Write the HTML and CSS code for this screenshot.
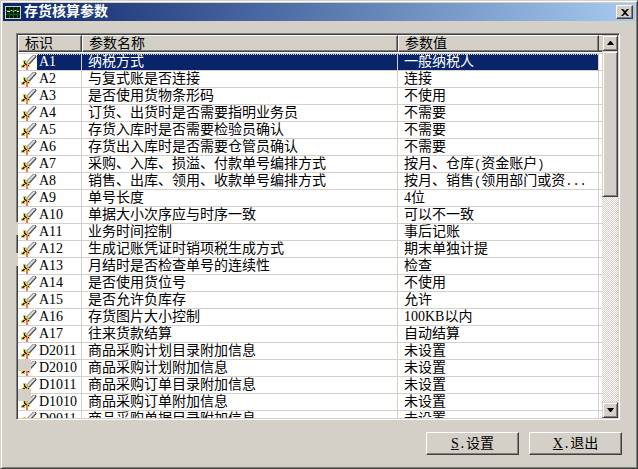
FILE: index.html
```html
<!DOCTYPE html>
<html lang="zh-CN">
<head>
    <meta charset="UTF-8">
    <meta name="viewport" content="width=device-width, initial-scale=1.0">
    <title>存货核算参数</title>
    <link rel="stylesheet" href="styles.css">
</head>
<body>
    <!-- shared row icon -->
    <svg class="sprite" aria-hidden="true">
        <symbol id="sword" viewBox="0 0 16 16">
            <path class="blade-edge" d="M5 8 12 1h3v2L8 11z"/>
            <path class="blade" d="M6 8 12.500 1.500h1.500v1L7.500 9.500z"/>
            <path class="shade" d="M8 10.500 15.500 2.500"/>
            <path class="gold" d="M2 6h3v2h1v1h1v1h2v3H6v-1H4v2H0v-3h2v-1h1V9H2z"/>
            <path class="hilt" d="M3 7h1v2h1v1h1v1h2v1H5v-1H4v-1H3zM1 12h1v-1h2v1H3v1H1z"/>
            <path class="tassel" d="M5 11h2v5H5z"/>
        </symbol>
    </svg>

    <div class="window">
        <div class="title-bar">
            <svg class="app-icon" viewBox="0 0 16 13" aria-hidden="true">
                <rect width="16" height="13" fill="#d4d0c8"/>
                <rect x="1" y="1" width="14" height="11" fill="#001800"/>
                <path d="M1 4.500h14M1 8.500h14M4.500 1v11M8.500 1v11M12.500 1v11" stroke="#006028"/>
                <path d="M2 5.500h3l1-1h1l1 1h1l1-1h1l1 1h2" fill="none" stroke="#c0e8c0"/>
            </svg>
            <h1>存货核算参数</h1>
            <button type="button" class="close" aria-label="关闭">
                <svg viewBox="0 0 8 7" aria-hidden="true"><path d="M0 0h2l2 2 2-2h2L5 3.500 8 7H6L4 5 2 7H0l3-3.500z"/></svg>
            </button>
        </div>

        <div class="content">
            <div class="list-box">
                <div class="list-view">
                    <table>
                        <colgroup>
                            <col class="col-id">
                            <col class="col-name">
                            <col>
                        </colgroup>
                        <thead>
                            <tr><th>标识</th><th>参数名称</th><th>参数值</th></tr>
                        </thead>
                        <tbody id="rows"></tbody>
                    </table>
                </div>
                <div class="scrollbar">
                    <button type="button" class="arrow" aria-label="向上"><svg viewBox="0 0 7 4"><path d="M3 0h1l3 4H0z"/></svg></button>
                    <div class="thumb"></div>
                    <div class="track"></div>
                    <button type="button" class="arrow" aria-label="向下"><svg viewBox="0 0 7 4"><path d="M0 0h7L4 4H3z"/></svg></button>
                </div>
                <span class="patch edge-a"></span>
                <span class="patch edge-b"></span>
                <span class="patch icon-a"></span>
                <span class="patch icon-b"></span>
            </div>

            <div class="button-group">
                <button type="button" class="btn"><u>S</u><span class="half">.</span>设置</button>
                <button type="button" class="btn"><u>X</u><span class="half">.</span>退出</button>
            </div>
        </div>
    </div>

    <script src="script.js"></script>
</body>
</html>
```
FILE: styles.css
```css
* {
    box-sizing: border-box;
    margin: 0;
    padding: 0;
}

body {
    height: 100vh;
    font-family: "Liberation Serif", "Noto Sans CJK SC", sans-serif;
    font-size: 14px;
    line-height: 16px;
    color: #000;
    background: #d4d0c8;
    overflow: hidden;
}

button {
    font: inherit;
    color: #000;
    background: #d4d0c8;
}

.sprite {
    display: none;
}

.window {
    display: flex;
    flex-direction: column;
    height: 100%;
    padding: 1px;
    border: 1px solid;
    border-color: #d4d0c8 #404040 #404040 #d4d0c8;
    box-shadow: inset 1px 1px #fff, inset -1px -1px #808080;
}

.title-bar {
    display: flex;
    align-items: center;
    gap: 3px;
    height: 18px;
    margin: 1px 1px 0;
    padding: 0 2px;
    background: linear-gradient(90deg, #0a246a, #a6caf0);
}

.app-icon {
    width: 16px;
    height: 13px;
}

.title-bar h1 {
    flex: 1;
    font-size: 14px;
    color: #fff;
}

.close {
    display: flex;
    align-items: center;
    justify-content: center;
    width: 17px;
    height: 14px;
    border: 1px solid;
    border-color: #fff #404040 #404040 #fff;
    box-shadow: inset -1px -1px #808080;
}

.close svg {
    width: 8px;
    height: 7px;
}

.content {
    flex: 1;
    display: flex;
    flex-direction: column;
    min-height: 0;
    padding: 12px 14px;
}

.list-box {
    position: relative;
    flex: 1;
    display: flex;
    min-height: 0;
    margin-right: 2px;
    padding: 1px;
    border: 1px solid;
    border-color: #808080 #fff #fff #808080;
    box-shadow: inset 1px 1px #404040, inset -1px -1px #d4d0c8;
    background: #fff;
}

/* grid lines run on past the last column */
.list-view {
    flex: 1;
    min-width: 0;
    overflow: hidden;
    padding-right: 3px;
    background:
        linear-gradient(#fff 1px, #d4d0c8 1px 15px, #808080 15px 16px, #404040 16px) 0 0 / 100% 17px no-repeat,
        linear-gradient(#fff 16px, #d4d0c8 16px) 0 19px / 100% 17px;
}

table {
    width: 100%;
    table-layout: fixed;
    border-collapse: separate;
    border-spacing: 0;
}

.col-id {
    width: 64px;
}

.col-name {
    width: 316px;
}

th {
    height: 17px;
    padding-left: 6px;
    text-align: left;
    font-weight: normal;
    line-height: 14px;
    background: #d4d0c8;
    border: 1px solid;
    border-color: #fff #404040 #404040 #fff;
    box-shadow: inset -1px -1px #808080;
}

/* gap between the header and the first row */
tbody::before {
    content: "";
    display: table-row;
    height: 2px;
}

td {
    height: 17px;
    padding-left: 6px;
    border-right: 1px solid #d4d0c8;
    border-bottom: 1px solid #d4d0c8;
    white-space: nowrap;
    overflow: hidden;
}

td:first-child {
    padding-left: 3px;
}

.cell-id {
    display: flex;
    gap: 2px;
    height: 16px;
}

.cell-id svg {
    flex: none;
    width: 16px;
    height: 16px;
}

.selected td {
    color: #fff;
    background: repeating-linear-gradient(90deg, #0a246a 0 1px, #d4d0c8 1px 2px) 0 0 / 100% 1px no-repeat #0a246a;
}

.selected td:first-child {
    background:
        linear-gradient(#fff, #fff) 0 0 / 19px 100% no-repeat,
        repeating-linear-gradient(90deg, #0a246a 0 1px, #d4d0c8 1px 2px) 0 0 / 100% 1px no-repeat #0a246a;
}

/* half-width punctuation */
.half {
    font-family: "Liberation Mono", monospace;
    font-size: 12px;
    line-height: 0;
}

/* sword icon */
.blade-edge { fill: #707070; }
.blade { fill: #e0e0e0; }
.shade { stroke: #404040; }
.gold { fill: #d8c850; }
.hilt { fill: #302800; }
.tassel { fill: #f07070; }

.selected .blade { fill: #7888a8; }
.selected .blade-edge { fill: #405080; }
.selected .gold { fill: #607060; }

.scrollbar {
    display: flex;
    flex-direction: column;
    width: 16px;
}

.arrow,
.thumb {
    border: 1px solid;
    border-color: #d4d0c8 #404040 #404040 #d4d0c8;
    box-shadow: inset 1px 1px #fff, inset -1px -1px #808080;
    background: #d4d0c8;
}

.arrow {
    display: flex;
    align-items: center;
    justify-content: center;
    height: 16px;
}

.arrow svg {
    width: 7px;
    height: 4px;
}

.thumb {
    flex: 145;
}

.track {
    flex: 206;
    background: repeating-conic-gradient(#fff 0 25%, #d4d0c8 0 50%) 0 0 / 2px 2px;
}

/* unpainted spots over the list */
.patch {
    position: absolute;
    background: #d4d0c8;
}

.edge-a,
.edge-b {
    left: -1px;
    width: 2px;
    height: 13px;
}

.edge-a { top: 188px; }
.edge-b { top: 219px; }

.icon-a,
.icon-b {
    left: 1px;
    width: 13px;
    height: 12px;
}

.icon-a { top: 325px; }
.icon-b { top: 355px; }

.button-group {
    display: flex;
    justify-content: flex-end;
    gap: 10px;
    margin-top: 12px;
}

.btn {
    width: 93px;
    height: 23px;
    border: 1px solid;
    border-color: #fff #404040 #404040 #fff;
    box-shadow: inset -1px -1px #808080;
}
```
FILE: script.js
```js
const params = [
    ['A1', '纳税方式', '一般纳税人'],
    ['A2', '与复式账是否连接', '连接'],
    ['A3', '是否使用货物条形码', '不使用'],
    ['A4', '订货、出货时是否需要指明业务员', '不需要'],
    ['A5', '存货入库时是否需要检验员确认', '不需要'],
    ['A6', '存货出入库时是否需要仓管员确认', '不需要'],
    ['A7', '采购、入库、损溢、付款单号编排方式', '按月、仓库(资金账户)'],
    ['A8', '销售、出库、领用、收款单号编排方式', '按月、销售(领用部门或资...'],
    ['A9', '单号长度', '4位'],
    ['A10', '单据大小次序应与时序一致', '可以不一致'],
    ['A11', '业务时间控制', '事后记账'],
    ['A12', '生成记账凭证时销项税生成方式', '期末单独计提'],
    ['A13', '月结时是否检查单号的连续性', '检查'],
    ['A14', '是否使用货位号', '不使用'],
    ['A15', '是否允许负库存', '允许'],
    ['A16', '存货图片大小控制', '100KB以内'],
    ['A17', '往来货款结算', '自动结算'],
    ['D2011', '商品采购计划目录附加信息', '未设置'],
    ['D2010', '商品采购计划附加信息', '未设置'],
    ['D1011', '商品采购订单目录附加信息', '未设置'],
    ['D1010', '商品采购订单附加信息', '未设置'],
    ['D0011', '商品采购单据目录附加信息', '未设置']
];

// brackets and dots get the monospaced face
function mixed(text) {
    return text.replace(/[().]+/g, '<span class="half">$&</span>');
}

document.getElementById('rows').innerHTML = params.map(([id, name, value], i) => `
    <tr class="${i === 0 ? 'selected' : ''}">
        <td><div class="cell-id"><svg aria-hidden="true"><use href="#sword"/></svg>${id}</div></td>
        <td>${name}</td>
        <td>${mixed(value)}</td>
    </tr>`).join('');
```
